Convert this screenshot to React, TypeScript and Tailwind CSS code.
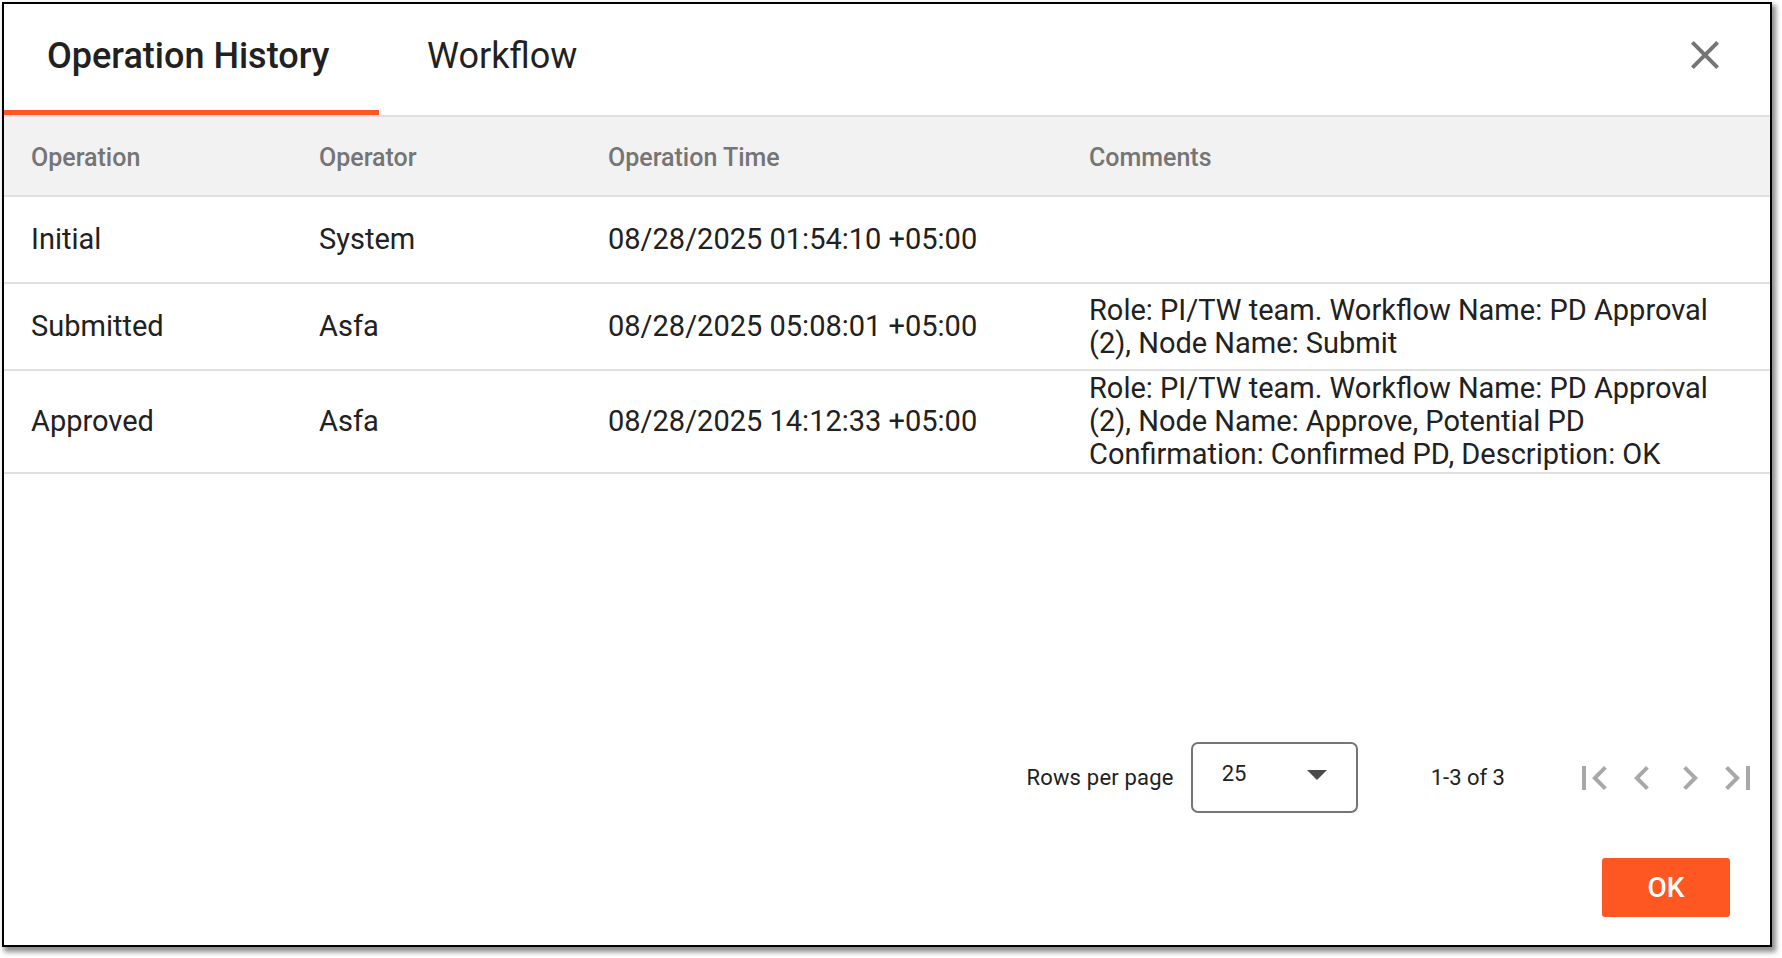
import React from 'react'

const rows = [
  { op: 'Initial', operator: 'System', time: '08/28/2025 01:54:10 +05:00', comments: '' },
  {
    op: 'Submitted',
    operator: 'Asfa',
    time: '08/28/2025 05:08:01 +05:00',
    comments: 'Role: PI/TW team. Workflow Name: PD Approval (2), Node Name: Submit',
  },
  {
    op: 'Approved',
    operator: 'Asfa',
    time: '08/28/2025 14:12:33 +05:00',
    comments:
      'Role: PI/TW team. Workflow Name: PD Approval (2), Node Name: Approve, Potential PD Confirmation: Confirmed PD, Description: OK',
  },
]

const cols = 'grid grid-cols-[288px_289px_481px_1fr]'

function Icon({ d, className }: { d: string; className?: string }) {
  return (
    <svg viewBox="0 0 24 24" className={className} fill="currentColor">
      <path d={d} />
    </svg>
  )
}

export default function App() {
  return (
    <div className="w-[1782px] h-[958px] bg-white pl-[2px] pt-[2px] font-['Roboto',sans-serif] text-[#212121]">
      <div className="w-[1770px] h-[945px] border-2 border-black shadow-[3px_4px_5px_1px_rgba(0,0,0,0.45)] flex flex-col">
        {/* Tabs */}
        <div className="h-[111px] flex">
          <div className="w-[375px] flex flex-col">
            <div className="flex-1 flex items-center pl-[43px] pb-[3px] text-[36px] font-medium">
              Operation History
            </div>
            <div className="h-[5px] bg-[#ff5722]" />
          </div>
          <div className="w-[247px] flex flex-col">
            <div className="flex-1 flex items-center pl-[48px] pb-[3px] text-[36px]">Workflow</div>
            <div className="h-[5px]" />
          </div>
          <button className="ml-auto mr-[41px] mt-[27px] w-[48px] h-[48px] text-[#757575]">
            <Icon
              className="w-[48px] h-[48px]"
              d="M19 6.41L17.59 5 12 10.59 6.41 5 5 6.41 10.59 12 5 17.59 6.41 19 12 13.41 17.59 19 19 17.59 13.41 12z"
            />
          </button>
        </div>

        {/* Table */}
        <div className="border-t-2 border-[#e0e0e0]">
          <div className={`${cols} h-[80px] pt-[3px] items-center bg-[#f2f2f2] border-b-2 border-[#e0e0e0] text-[25px] font-medium text-[#757575]`}>
            <div className="px-[27px]">Operation</div>
            <div className="px-[27px]">Operator</div>
            <div className="px-[27px]">Operation Time</div>
            <div className="px-[27px]">Comments</div>
          </div>
          {rows.map((r) => (
            <div
              key={r.op}
              className={`${cols} min-h-[87px] py-px items-center border-b-2 border-[#e0e0e0] text-[29px] leading-[33px]`}
            >
              <div className="px-[27px]">{r.op}</div>
              <div className="px-[27px]">{r.operator}</div>
              <div className="px-[27px]">{r.time}</div>
              <div className="pl-[27px] pr-[27px]">{r.comments}</div>
            </div>
          ))}
        </div>

        <div className="flex-1" />

        {/* Pagination */}
        <div className="h-[71px] flex items-center justify-end pr-[8px]">
          <span className="text-[22px] tracking-[0.2px]">Rows per page</span>
          <div className="ml-[17px] w-[167px] h-[71px] border-2 border-[#757575] rounded-[7px] flex items-center justify-between pl-[29px] pr-[15px] pb-[8px]">
            <span className="text-[22px]">25</span>
            <Icon className="w-[48px] h-[48px] text-[#4a4a4a]" d="M7 10l5 5 5-5z" />
          </div>
          <span className="ml-[73px] text-[22px]">1-3 of 3</span>
          <div className="ml-[65px] flex text-[#a8a8a8]">
            <Icon className="w-[48px] h-[48px]" d="M18.41 16.59L13.82 12l4.59-4.59L17 6l-6 6 6 6zM6 6h2v12H6z" />
            <Icon className="w-[48px] h-[48px]" d="M15.41 7.41L14 6l-6 6 6 6 1.41-1.41L10.83 12z" />
            <Icon className="w-[48px] h-[48px]" d="M10 6L8.59 7.41 13.17 12l-4.58 4.59L10 18l6-6z" />
            <Icon className="w-[48px] h-[48px]" d="M5.59 7.41L10.18 12l-4.59 4.59L7 18l6-6-6-6zM16 6h2v12h-2z" />
          </div>
        </div>

        {/* Footer */}
        <div className="mt-[45px] mb-[28px] flex justify-end pr-[40px]">
          <button className="w-[128px] h-[59px] bg-[#ff5722] text-white text-[28px] font-medium rounded-[3px]">OK</button>
        </div>
      </div>
    </div>
  )
}
